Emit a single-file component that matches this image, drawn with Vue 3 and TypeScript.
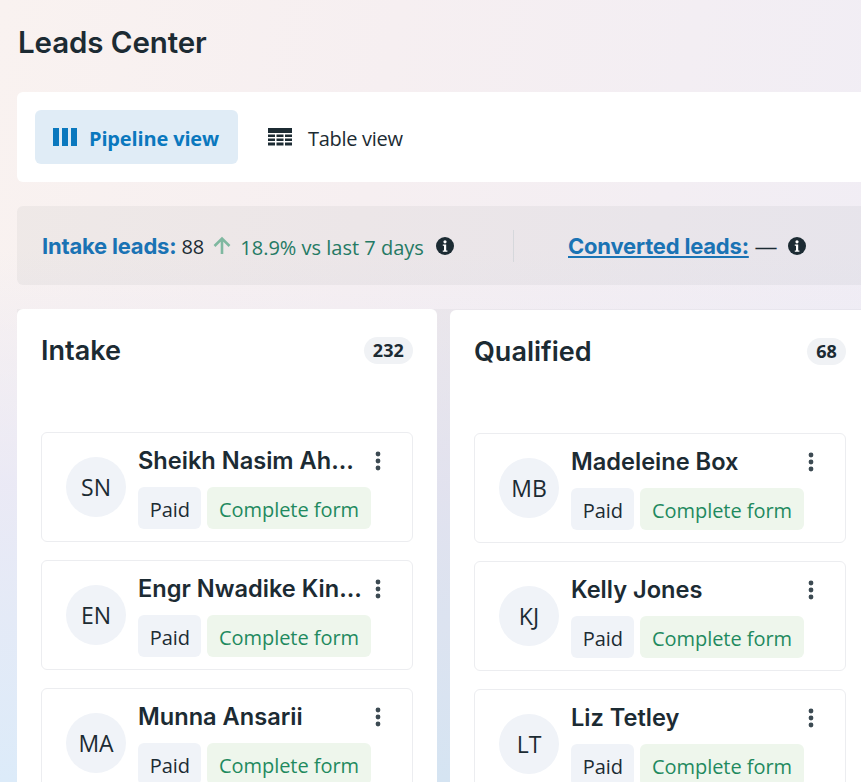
<script setup lang="ts">
interface Lead { initials: string; name: string }
interface Column { title: string; count: number; leads: Lead[] }
const columns: Column[] = [
  { title: 'Intake', count: 232, leads: [
    { initials: 'SN', name: 'Sheikh Nasim Ah…' },
    { initials: 'EN', name: 'Engr Nwadike Kin…' },
    { initials: 'MA', name: 'Munna Ansarii' },
  ] },
  { title: 'Qualified', count: 68, leads: [
    { initials: 'MB', name: 'Madeleine Box' },
    { initials: 'KJ', name: 'Kelly Jones' },
    { initials: 'LT', name: 'Liz Tetley' },
  ] },
]
</script>

<template>
  <main class="page">
    <h1 class="title">Leads Center</h1>
    <section class="tabs">
      <button class="tab active">
        <svg width="24" height="18" viewBox="0 0 24 18"><path fill="#0a78be" d="M0 0h6v18H0zM9 0h6v18H9zM18 0h6v18h-6z"/></svg>
        <span>Pipeline view</span>
      </button>
      <button class="tab plain">
        <svg width="24" height="18" viewBox="0 0 24 18"><path fill="#1c2b33" d="M0 0h24v5H0zM0 6.5h7v2.6H0zM8.5 6.5h7v2.6h-7zM17 6.5h7v2.6h-7zM0 10.5h7v2.6H0zM8.5 10.5h7v2.6h-7zM17 10.5h7v2.6h-7zM0 14.6h7v3H0zM8.5 14.6h7v3h-7zM17 14.6h7v3h-7z"/></svg>
        <span>Table view</span>
      </button>
    </section>
    <section class="stats">
      <div class="stat first">
        <span class="label">Intake leads:</span>
        <span class="value">88</span>
        <svg class="arrow" width="18" height="18" viewBox="0 0 18 18"><path fill="none" stroke="#7fb8a0" stroke-width="2.6" d="M9 18V2.5M1.5 10 9 2.5 16.5 10"/></svg>
        <span class="trend">18.9% vs last 7 days</span>
        <svg class="info" width="18" height="18" viewBox="0 0 18 18"><circle cx="9" cy="9" r="9" fill="#1c2b33"/><circle cx="9" cy="4.8" r="1.6" fill="#fff"/><path fill="#fff" d="M6.8 7.4h3.4v6h1.2v1.4H6.8v-1.4H8V8.8H6.8z"/></svg>
      </div>
      <div class="divider"></div>
      <div class="stat second">
        <span class="label link">Converted leads:</span>
        <span class="value dash">—</span>
        <svg class="info" width="18" height="18" viewBox="0 0 18 18"><circle cx="9" cy="9" r="9" fill="#1c2b33"/><circle cx="9" cy="4.8" r="1.6" fill="#fff"/><path fill="#fff" d="M6.8 7.4h3.4v6h1.2v1.4H6.8v-1.4H8V8.8H6.8z"/></svg>
      </div>
    </section>
    <section class="board">
      <article v-for="col in columns" :key="col.title" class="column">
        <header class="col-head">
          <h2>{{ col.title }}</h2>
          <span class="count">{{ col.count }}</span>
        </header>
        <div class="card" v-for="lead in col.leads" :key="lead.initials">
          <div class="avatar">{{ lead.initials }}</div>
          <div class="body">
            <div class="name-row">
              <span class="name">{{ lead.name }}</span>
              <svg class="more" width="6" height="20" viewBox="0 0 6 20"><circle cx="3" cy="3" r="2.4"/><circle cx="3" cy="10" r="2.4"/><circle cx="3" cy="17" r="2.4"/></svg>
            </div>
            <div class="tags">
              <span class="tag paid">Paid</span>
              <span class="tag form">Complete form</span>
            </div>
          </div>
        </div>
      </article>
    </section>
  </main>
</template>

<style>
html, body { margin: 0; height: 782px; overflow: hidden; }
</style>

<style scoped>
.page {
  box-sizing: border-box;
  width: 861px;
  height: 782px;
  overflow: hidden;
  padding: 0 0 0 17px;
  font-family: "Open Sans", "Noto Sans", sans-serif;
  color: #1c2b33;
  background:
    linear-gradient(180deg, rgba(232, 232, 246, 0) 32%, rgba(232, 232, 246, 0.85) 62%, #dcebf9 100%),
    linear-gradient(100deg, #f9f2f0 0%, #f6eff1 40%, #f0edf5 100%);
}
.title {
  margin: 0;
  padding: 25px 0 0 1px;
  height: 92px;
  box-sizing: border-box;
  font: 600 29.5px/34px Inter, sans-serif;
  letter-spacing: -0.1px;
}
.tabs {
  display: flex;
  gap: 12px;
  width: 860px;
  height: 90px;
  box-sizing: border-box;
  padding: 18px;
  background: #fff;
  border-radius: 6px;
}
.tab {
  display: flex;
  align-items: center;
  gap: 12px;
  height: 54px;
  padding: 0 18px;
  border: 0;
  border-radius: 6px;
  background: transparent;
  font: 400 20px/26px "Open Sans", sans-serif;
  letter-spacing: -0.3px;
  color: #1c2b33;
}
.tab span { padding-top: 4px; }
.tab.plain { gap: 16px; }
.tab.active {
  background: #e0ecf6;
  color: #0a78be;
  font-weight: 700;
  letter-spacing: -0.15px;
  padding-right: 19px;
}
.stats {
  display: flex;
  align-items: center;
  width: 860px;
  height: 79px;
  margin-top: 24px;
  box-sizing: border-box;
  padding: 0 0 0 25px;
  border-radius: 6px;
  background: rgba(28, 43, 51, 0.045);
  font-size: 20px;
}
.stat { display: flex; align-items: center; }
.first { width: 471px; }
.label { font: 700 22px/28px Inter, sans-serif; letter-spacing: -0.2px; color: #1a73b4; }
.link { text-decoration: underline; }
.value { margin-left: 5px; padding-top: 2px; }
.dash { margin-left: 7px; transform: scaleX(1.15); }
.arrow { margin-left: 9px; margin-top: -2px; }
.trend { margin-left: 9px; padding-top: 4px; color: #257a64; }
.info { margin-left: 12px; }
.divider { width: 1px; height: 32px; background: #d6d8dc; }
.second { margin-left: 54px; }
.board {
  display: flex;
  align-items: flex-start;
  gap: 13px;
  margin-top: 24px;
  background: rgba(28, 43, 51, 0.035);
  height: 500px;
}
.column {
  flex: none;
  box-sizing: border-box;
  width: 420px;
  height: 600px;
  padding: 0 24px;
  background: #fff;
  border-radius: 6px;
}
.column + .column { margin-top: 1px; }
.col-head {
  display: flex;
  justify-content: space-between;
  align-items: center;
  height: 123px;
  padding-bottom: 40px;
  box-sizing: border-box;
}
.col-head h2 { margin: 0; font: 600 27px/34px Inter, sans-serif; letter-spacing: 0; }
.count {
  padding: 0 9px;
  height: 27px;
  border-radius: 13.5px;
  background: #f0f2f5;
  font: 700 18px/27px "Open Sans", sans-serif;
  letter-spacing: 0.1px;
}
.card {
  display: flex;
  align-items: flex-start;
  gap: 12px;
  box-sizing: border-box;
  height: 110px;
  margin-bottom: 18px;
  padding: 14px 24px 0;
  border: 1px solid #ecedf0;
  border-radius: 6px;
}
.avatar {
  flex: none;
  width: 60px;
  height: 60px;
  margin-top: 10px;
  border-radius: 50%;
  background: #f0f3f8;
  text-align: center;
  font: 400 23px/60px "Open Sans", sans-serif;
}
.body { flex: 1; min-width: 0; }
.name-row { display: flex; align-items: center; justify-content: space-between; height: 28px; }
.name {
  white-space: nowrap;
  font: 600 23.6px/28px Inter, sans-serif;
}
.more { fill: #3c4a52; margin-right: 7px; flex: none; }
.tags { display: flex; gap: 6px; margin-top: 12px; }
.tag {
  height: 42px;
  padding: 0 11.7px;
  border-radius: 6px;
  font-size: 20px;
  line-height: 46px;
  letter-spacing: -0.05px;
}
.paid { background: #f0f3f8; padding: 0 11.4px 0 11.7px; }
.form { background: #eef6ec; color: #1f8a5f; }
</style>
